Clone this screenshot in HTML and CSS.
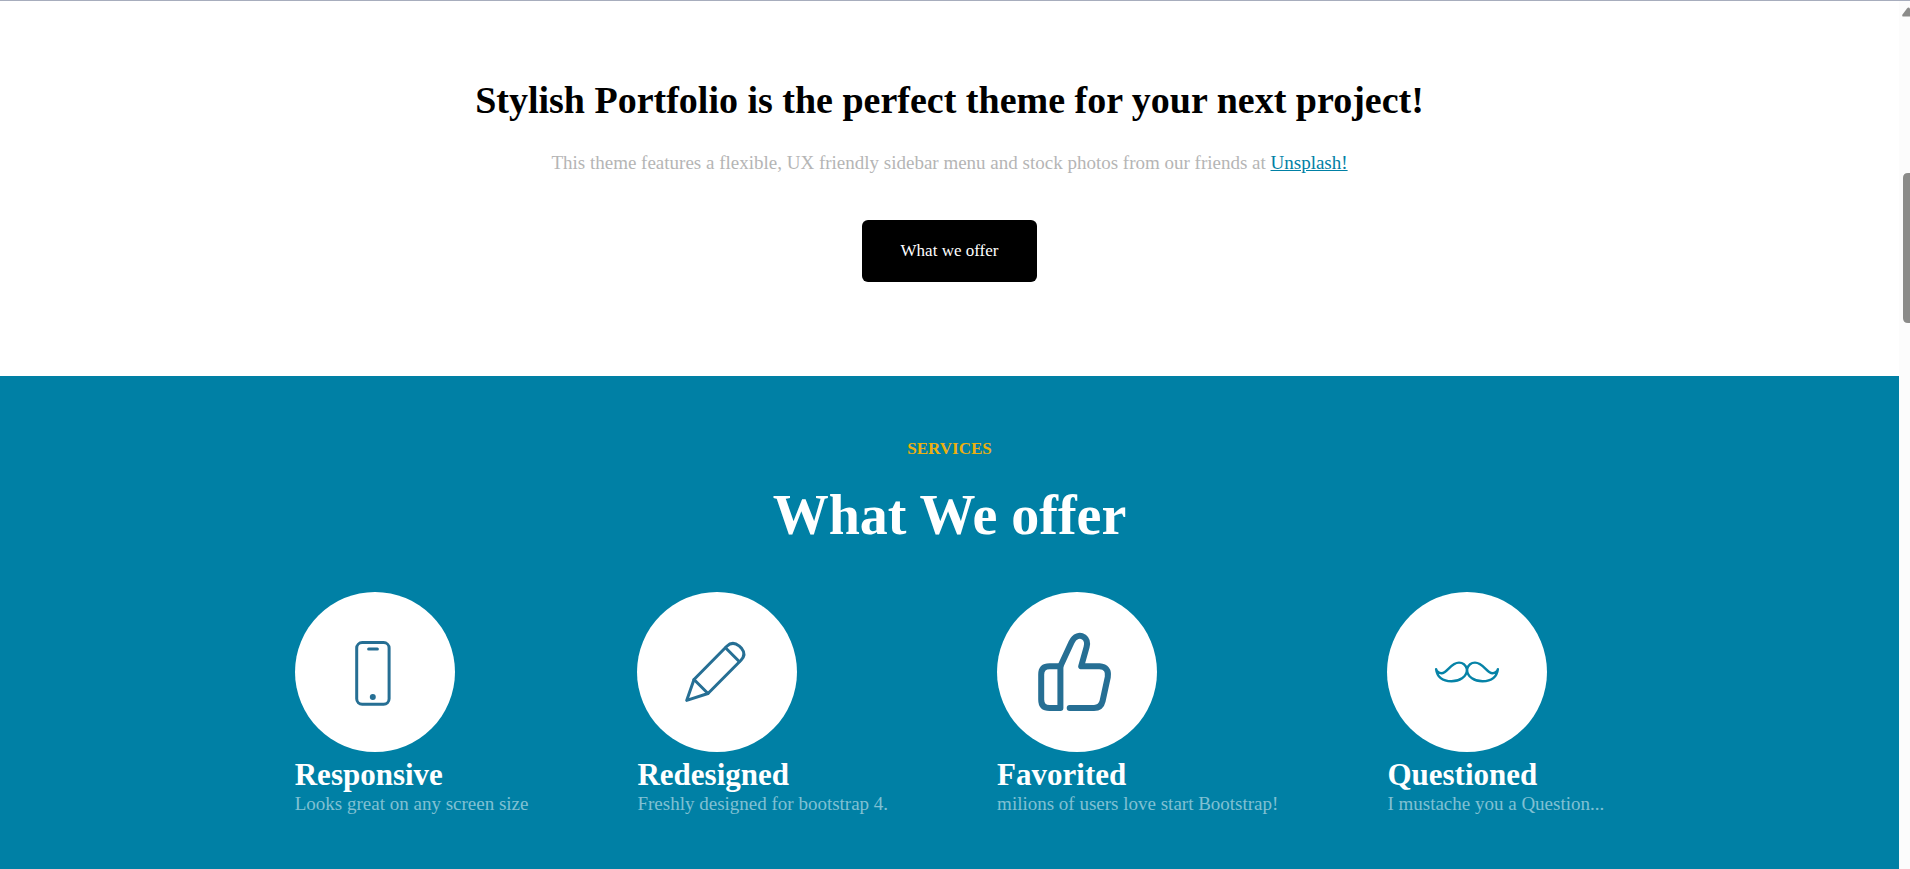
FILE: index.html
```html
<!DOCTYPE html>
<html lang="en">
<head>
<meta charset="utf-8">
<title>Stylish Portfolio</title>
<link rel="stylesheet" href="styles.css">
</head>
<body>
<div class="page">
  <main class="content">
    <section class="intro">
      <h2 class="intro-title">Stylish Portfolio is the perfect theme for your next project!</h2>
      <p class="intro-text">This theme features a flexible, UX friendly sidebar menu and stock photos from our friends at <a class="intro-link" href="#">Unsplash!</a></p>
      <button class="intro-button" type="button">What we offer</button>
    </section>
    <section class="services">
      <h4 class="services-label">SERVICES</h4>
      <h2 class="services-title">What We offer</h2>
      <div class="cards">
        <article class="card">
          <svg class="card-icon" viewBox="0 0 160 160" aria-hidden="true">
            <circle cx="80" cy="80" r="80" fill="#fff"/>
            <g fill="none" stroke="#266f94" stroke-width="3" stroke-linecap="round">
              <rect x="61.7" y="50.6" width="32.4" height="61.6" rx="5.5"/>
              <path d="M73.6 57H82.400"/>
            </g>
            <circle cx="77.8" cy="105" r="3" fill="#266f94"/>
          </svg>
          <h3 class="card-title">Responsive</h3>
          <p class="card-text">Looks great on any screen size</p>
        </article>
        <article class="card">
          <svg class="card-icon" viewBox="0 0 160 160" aria-hidden="true">
            <circle cx="80" cy="80" r="80" fill="#fff"/>
            <g fill="none" stroke="#266f94" stroke-width="3" stroke-linecap="round" stroke-linejoin="round">
              <path d="M49.700 108.400L57 87.500L89.800 54.300Q95.500 48.600 102 53.800L104.600 56.400Q109.500 62.500 104 68.300L71 101.500Z"/>
              <path d="M57 87.500L71 101.500M88.500 55.800L102.200 69.500"/>
            </g>
          </svg>
          <h3 class="card-title">Redesigned</h3>
          <p class="card-text">Freshly designed for bootstrap 4.</p>
        </article>
        <article class="card">
          <svg class="card-icon" viewBox="0 0 160 160" aria-hidden="true">
            <circle cx="80" cy="80" r="80" fill="#fff"/>
            <g fill="none" stroke="#266f94" stroke-width="6" stroke-linecap="round" stroke-linejoin="round">
              <path d="M63.400 116V74.300H52.500Q44.200 74.300 44.200 82.500V107.500Q44.200 116 52.500 116H63.400"/>
              <path d="M63.400 74.300L74.500 50.200C77.500 43.800 83 42.400 87 45.200C90.500 47.800 90.500 51.500 89.600 55L84.200 74.300H102.500Q112.300 75 110.800 85L105.600 109Q104 116 97 116H72.700"/>
            </g>
          </svg>
          <h3 class="card-title">Favorited</h3>
          <p class="card-text">milions of users love start Bootstrap!</p>
        </article>
        <article class="card">
          <svg class="card-icon" viewBox="0 0 160 160" aria-hidden="true">
            <circle cx="80" cy="80" r="80" fill="#fff"/>
            <g fill="none" stroke="#0683a7" stroke-width="2.4" stroke-linecap="round" stroke-linejoin="round">
              <path d="M80 77C78.500 72.500 75.500 70.600 72 70.600C63.500 70.600 60.500 81.200 54.500 81.200C51.500 81.200 49.800 79.500 49.100 77.200C50.200 85.500 56 89.300 64.500 89.300C72 89.300 80 85.500 80 77Z"/>
              <path d="M80 77C81.500 72.500 84.500 70.600 88 70.600C96.500 70.600 99.500 81.200 105.500 81.200C108.500 81.200 110.200 79.500 110.900 77.200C109.800 85.500 104 89.300 95.500 89.300C88 89.300 80 85.500 80 77Z"/>
            </g>
          </svg>
          <h3 class="card-title">Questioned</h3>
          <p class="card-text">I mustache you a Question...</p>
        </article>
      </div>
    </section>
  </main>
  <div class="scrollbar" aria-hidden="true">
    <svg class="scrollbar-shape" viewBox="0 0 11 330">
      <path d="M3.500 13.500L8 7.500Q9.500 5.500 11 7.500V15.500H4.500Q2.500 15.500 3.500 13.500Z"/>
      <path d="M11 172H9Q4 172 4 177V317Q4 322 9 322H11Z"/>
    </svg>
  </div>
</div>
</body>
</html>
```
FILE: styles.css
```css
* {
  box-sizing: border-box;
  margin: 0;
  padding: 0;
}

body {
  font-family: "Liberation Serif", "Times New Roman", serif;
  background: #fff;
  overflow: hidden;
}

.page {
  display: flex;
  min-height: 100vh;
  border-top: 1px solid #a7adbd;
}

.content {
  flex: 1;
  display: flex;
  flex-direction: column;
  text-align: center;
}

.intro {
  display: flex;
  flex-direction: column;
  align-items: center;
  padding: 76px 0 94px;
}

.intro-title {
  font-size: 38px;
  line-height: 46px;
}

.intro-text {
  margin-top: 29px;
  font-size: 19px;
  line-height: 22px;
  color: #b5b5b5;
}

.intro-link {
  color: #0080a5;
}

.intro-button {
  margin-top: 46px;
  padding: 22px 39px;
  font-family: inherit;
  font-size: 17px;
  line-height: 18px;
  color: #fff;
  background: #000;
  border: 0;
  border-radius: 6px;
}

.services {
  flex: 1;
  padding: 63px 24px 56px;
  color: #fff;
  background: #0080a5;
}

.services-label {
  font-size: 17px;
  line-height: 20px;
  color: #ecb00f;
}

.services-title {
  margin-top: 24px;
  font-size: 56px;
  line-height: 64px;
}

.cards {
  display: flex;
  justify-content: center;
  gap: 109px;
  margin-top: 45px;
  text-align: left;
}

.card-icon {
  display: block;
  width: 160px;
  height: 160px;
}

.card-title {
  margin-top: 5px;
  font-size: 31px;
  line-height: 36px;
}

.card-text {
  font-size: 19px;
  line-height: 22px;
  color: #80c0d3;
}

.scrollbar {
  width: 11px;
  background: #fcfcfc;
}

.scrollbar-shape {
  display: block;
  width: 11px;
  fill: #8b8b89;
}
```
